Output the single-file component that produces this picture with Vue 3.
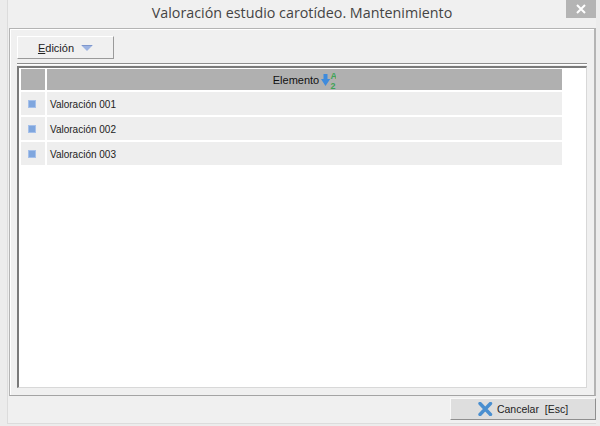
<script setup>
import { ref } from 'vue';

const rows = ref(['Valoración 001', 'Valoración 002', 'Valoración 003']);
</script>

<template>
  <div class="window">
    <div class="frame">
      <div class="titlebar">
        <span class="title">Valoración estudio carotídeo. Mantenimiento</span>
        <button class="close">
          <svg width="10" height="10" viewBox="0 0 10 10">
            <path d="M1 1 L9 9 M9 1 L1 9" stroke="#fff" stroke-width="2" fill="none" />
          </svg>
        </button>
      </div>

      <div class="panel">
        <div class="toolbar">
          <button class="menu-btn">
            <span><u>E</u>dición</span>
            <svg width="12" height="6" viewBox="0 0 12 6">
              <path d="M0 0 H12 L6 6 Z" fill="#9db4e2" />
              <path d="M1 0.5 H11" stroke="#7f97cc" stroke-width="1" />
            </svg>
          </button>
        </div>
        <div class="separator"></div>

        <div class="grid">
          <div class="row head">
            <div class="marker-cell"></div>
            <div class="main-cell">
              Elemento
              <svg class="sort" width="15" height="19" viewBox="0 0 15 19">
                <path d="M2.5 3 H6.5 V8 H9.2 L4.5 15 L0 8 H2.5 Z" fill="#3f8bdc" />
                <text x="9.5" y="8" class="sort-a">A</text>
                <text x="9.5" y="18" class="sort-a">2</text>
              </svg>
            </div>
          </div>
          <div v-for="row in rows" :key="row" class="row body">
            <div class="marker-cell"><span class="marker"></span></div>
            <div class="main-cell">{{ row }}</div>
          </div>
        </div>
      </div>

      <div class="footer">
        <button class="cancel">
          <svg width="15" height="14" viewBox="0 0 15 14">
            <path d="M2 1.5 L12.5 12.5 M12.5 1.5 L2 12.5" stroke="#4a8fd0" stroke-width="3.4" stroke-linecap="round" fill="none" />
          </svg>
          <span>Cancelar&nbsp; [Esc]</span>
        </button>
      </div>
    </div>
  </div>
</template>

<style scoped>
.window {
  width: 600px;
  height: 426px;
  box-sizing: border-box;
  padding: 0 4px 2px 7px;
  background: #ececec;
  font-family: "Liberation Sans", Arial, sans-serif;
  color: #222;
  overflow: hidden;
  position: relative;
}

.frame {
  height: 100%;
  box-sizing: border-box;
  padding-left: 1px;
  background: #f0f0f0;
  border-left: 1px solid #dcdcdc;
  border-bottom: 1px solid #dcdcdc;
  display: flex;
  flex-direction: column;
}

.titlebar {
  height: 28px;
  box-sizing: border-box;
  padding-bottom: 3px;
  flex: none;
  display: flex;
  align-items: center;
  justify-content: center;
}

.title {
  font-family: "Open Sans", "Liberation Sans", sans-serif;
  font-size: 14.3px;
  color: #444;
  margin-left: -1px;
}

.close {
  position: absolute;
  top: 0;
  right: 4px;
  width: 30px;
  height: 18px;
  border: none;
  padding: 0;
  background: #b4b4b4;
  display: flex;
  align-items: center;
  justify-content: center;
}

.panel {
  height: 368px;
  flex: none;
  box-sizing: border-box;
  border: 1px solid #b4b4b4;
  border-right-width: 2px;
  border-bottom-color: #a4a4a4;
  box-shadow: inset 1px 1px 0 #fff;
  padding: 7px;
  display: flex;
  flex-direction: column;
}

.toolbar {
  display: flex;
  flex: none;
}

.menu-btn {
  width: 97px;
  height: 23px;
  box-sizing: border-box;
  background: #f0f0f0;
  border: 1px solid #fff;
  border-right-color: #9a9a9a;
  border-bottom-color: #9a9a9a;
  font: inherit;
  font-size: 11px;
  color: #222;
  display: flex;
  align-items: center;
  justify-content: center;
  gap: 7px;
  padding: 0;
}

.separator {
  height: 2px;
  flex: none;
  margin-top: 4px;
  margin-bottom: 1px;
  border-top: 1px solid #8c8c8c;
  border-bottom: 1px solid #fff;
  box-sizing: border-box;
}

.grid {
  flex: 1;
  background: #fff;
  border: 2px solid #7a7a7a;
  border-right: 1px solid #d8d8d8;
  border-bottom: 1px solid #d8d8d8;
  padding: 1px 24px 0 2px;
  display: flex;
  flex-direction: column;
  gap: 2px;
}

.row {
  display: flex;
  gap: 2px;
}

.head {
  height: 21px;
  background: #fff;
  font-size: 11px;
  color: #111;
}

.head .marker-cell,
.head .main-cell {
  background: #b0b0b0;
}

.head .main-cell {
  justify-content: center;
  gap: 2px;
}

.sort {
  margin-top: 1px;
}

.body {
  height: 23px;
  font-size: 10px;
}

.body .marker-cell,
.body .main-cell {
  background: #eeeeee;
}

.body .main-cell {
  padding: 1px 0 0 3px;
}

.marker-cell {
  width: 24px;
  box-sizing: border-box;
  padding-right: 2px;
  flex: none;
  display: flex;
  align-items: center;
  justify-content: center;
}

.main-cell {
  flex: 1;
  display: flex;
  align-items: center;
}

.marker {
  box-sizing: content-box;
  width: 6px;
  height: 6px;
  background: #7fa6de;
  border: 1px solid #a5c0ea;
}

.sort-a {
  font-family: "Liberation Sans", sans-serif;
  font-size: 9px;
  font-weight: bold;
  fill: #3fa356;
}

.footer {
  flex: 1;
  display: flex;
  justify-content: flex-end;
  align-items: center;
  padding-bottom: 2px;
}

.cancel {
  width: 146px;
  height: 22px;
  box-sizing: border-box;
  background: #dedede;
  border: 1px solid #f8f8f8;
  border-right-color: #8f8f8f;
  border-bottom-color: #8f8f8f;
  font: inherit;
  font-size: 10.5px;
  color: #222;
  display: flex;
  align-items: center;
  justify-content: center;
  gap: 4px;
  padding: 0;
}
</style>
